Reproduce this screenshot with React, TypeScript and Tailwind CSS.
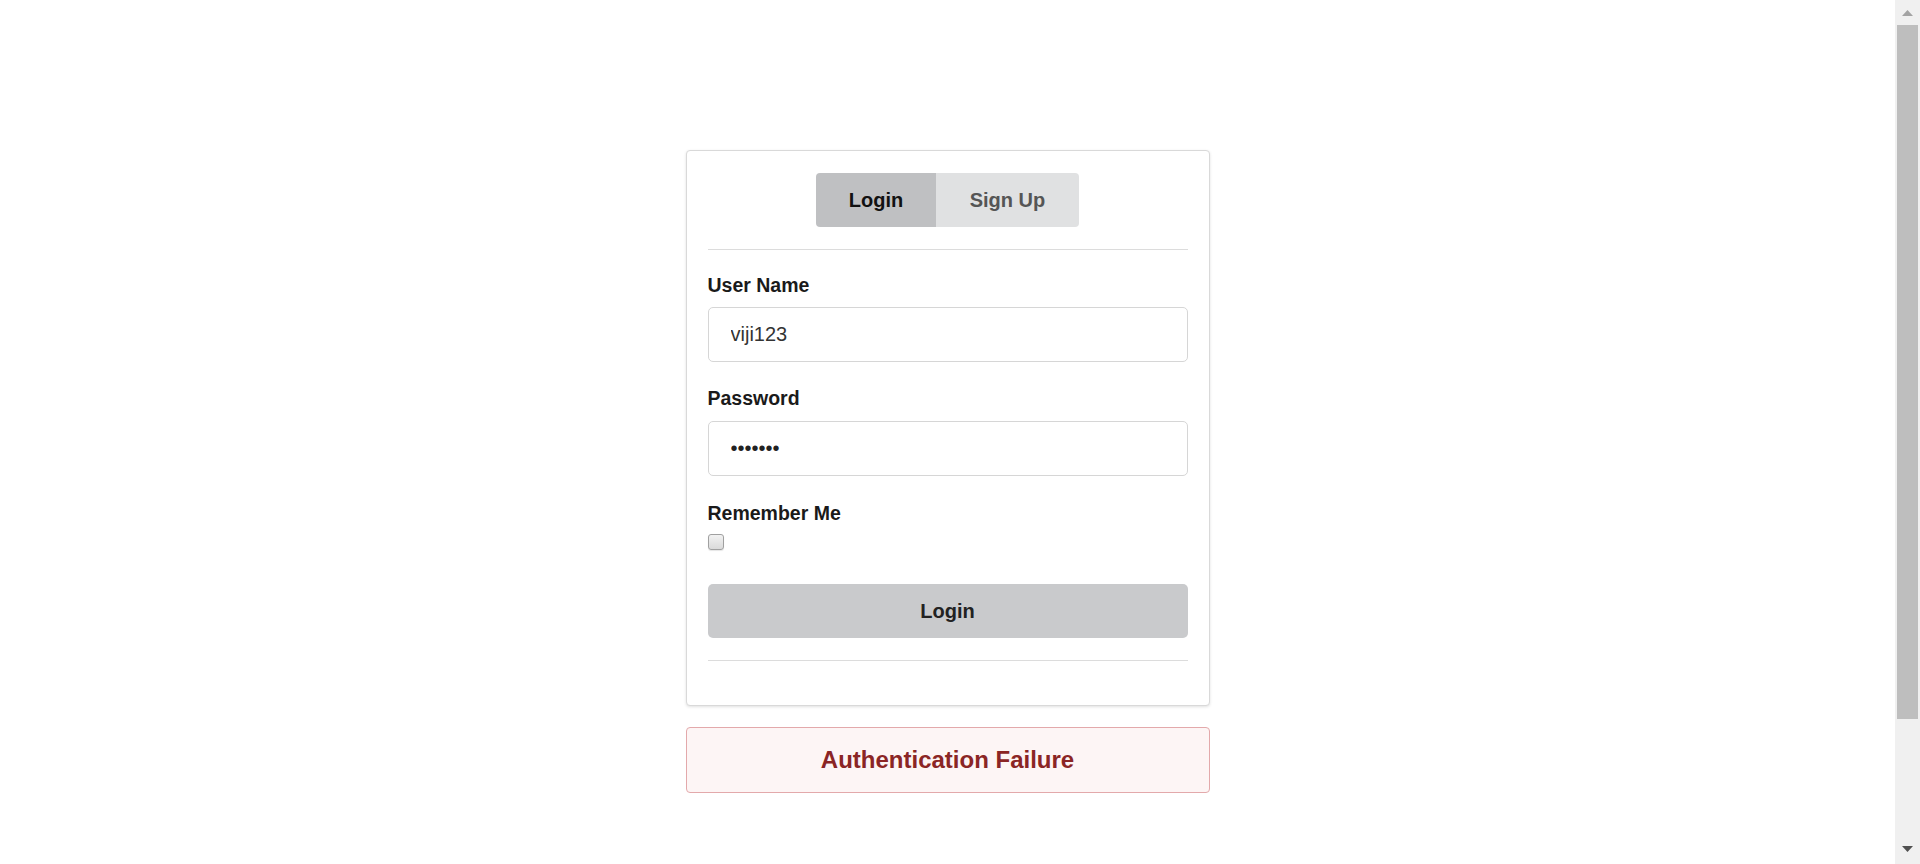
function Scrollbar() {
  return (
    <div className="flex w-[25px] shrink-0 flex-col bg-[#f0f0f0]">
      <div className="flex h-[25px] items-center justify-center">
        <svg width="11" height="6" viewBox="0 0 11 6">
          <path d="M5.5 0 L11 6 L0 6 Z" fill="#a3a3a3" />
        </svg>
      </div>
      <div className="mx-[2px] h-[694px] bg-[#bebebe]" />
      <div className="flex-1" />
      <div className="flex h-[30px] items-center justify-center">
        <svg width="11" height="6" viewBox="0 0 11 6">
          <path d="M0 0 L11 0 L5.5 6 Z" fill="#505050" />
        </svg>
      </div>
    </div>
  );
}

function Label({ children, className = "" }: { children: string; className?: string }) {
  return (
    <label className={`block text-[19.5px] font-bold leading-[22px] text-[#1a1a1a] ${className}`}>
      {children}
    </label>
  );
}

export default function App() {
  return (
    <div className="flex h-[864px] overflow-hidden bg-white font-['Liberation_Sans',Arial,sans-serif]">
      <main className="flex-1 pt-[150px]">
        <div className="mx-auto w-[524px]">
          <section className="rounded-[4px] border border-[#d9d9d9] bg-white px-[21px] pt-[22px] pb-[22px] shadow-[0_1px_3px_rgba(0,0,0,0.12)]">
            <div className="flex justify-center">
              <div className="flex h-[54px] overflow-hidden rounded-[4px] text-[20px] font-bold">
                <button className="w-[120px] bg-[#bfc0c2] text-[#111]">Login</button>
                <button className="w-[143px] bg-[#e0e1e2] text-[#555]">Sign Up</button>
              </div>
            </div>

            <hr className="mt-[22px] border-t border-[#dcdcdc]" />

            <form className="mt-[24px]">
              <Label className="mb-[11px]">User Name</Label>
              <input
                type="text"
                defaultValue="viji123"
                className="block h-[55px] w-full rounded-[5px] border border-[#d6d6d6] px-[22px] text-[20px] text-[#333] outline-none"
              />

              <Label className="mt-[25px] mb-[12px]">Password</Label>
              <input
                type="password"
                defaultValue="abcdefg"
                className="block h-[55px] w-full rounded-[5px] border border-[#d6d6d6] px-[22px] text-[20px] text-[#222] outline-none"
              />

              <Label className="mt-[26px]">Remember Me</Label>
              <input
                type="checkbox"
                className="mt-[10px] block h-[16px] w-[16px] appearance-none rounded-[3px] border border-[#a0a0a0] bg-gradient-to-b from-[#f2f2f2] to-[#dadada] shadow-[0_1px_1px_rgba(0,0,0,0.1)]"
              />

              <button
                type="button"
                className="mt-[34px] block h-[54px] w-full rounded-[5px] bg-[#c9cacc] text-[20px] font-bold text-[#222]"
              >
                Login
              </button>
            </form>

            <hr className="mt-[22px] mb-[22px] border-t border-[#dcdcdc]" />
          </section>

          <div className="mt-[21px] flex h-[66px] items-center justify-center rounded-[4px] border border-[#e3a9ab] bg-[#fdf5f5] text-[24px] font-bold text-[#8b2525]">
            Authentication Failure
          </div>
        </div>
      </main>
      <Scrollbar />
    </div>
  );
}
